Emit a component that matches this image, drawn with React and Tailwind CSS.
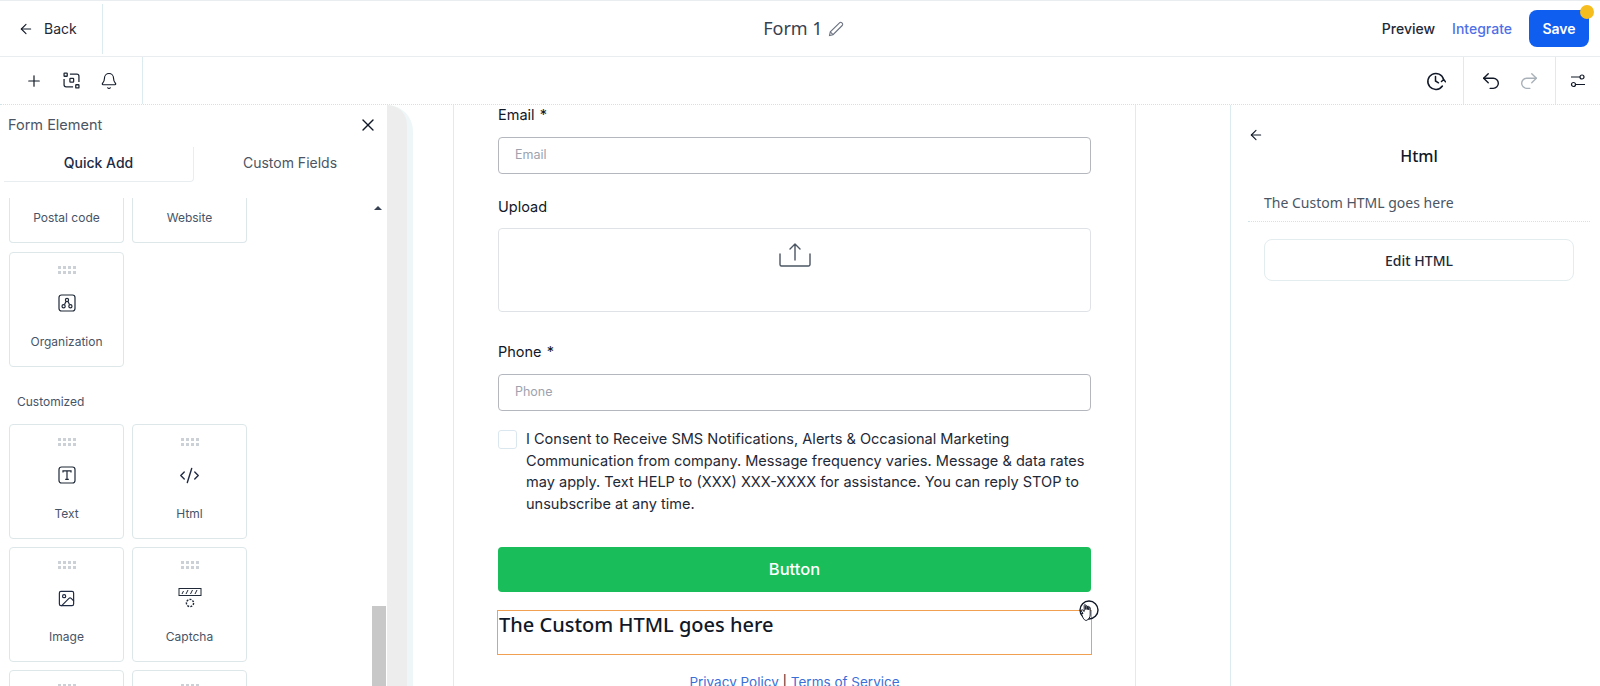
import { ArrowLeft, Plus, Bell, Undo2, Redo2, X, CodeXml, Image } from "lucide-react";

const inter = { fontFamily: "Inter, sans-serif" };

function ScanIcon() {
  return (
    <svg width="17" height="17" viewBox="0 0 16 16" fill="none" stroke="#1f2937" strokeWidth="1.2">
      <rect x="1" y="1" width="3" height="3" rx="0.5" />
      <rect x="6.5" y="6" width="3.5" height="3.5" rx="0.5" />
      <rect x="12" y="12" width="3" height="3" rx="0.5" />
      <path d="M6.5 2H13a2 2 0 0 1 2 2v5.5M1 6.5V12a2 2 0 0 0 2 2h6.5" />
    </svg>
  );
}

function HistoryIcon() {
  return (
    <svg width="20" height="20" viewBox="0 0 20 20" fill="none" stroke="#111827" strokeWidth="1.5" strokeLinecap="round">
      <path d="M17.6 8.5A8 8 0 1 0 16.4 15" />
      <path d="M9.5 5.5V10l3 1.8" />
      <path d="M15.5 10.5l2.2-2 1.8 2.2" />
    </svg>
  );
}

function SlidersIcon() {
  return (
    <svg width="16" height="14" viewBox="0 0 16 14" fill="none" stroke="#111827" strokeWidth="1.2">
      <circle cx="12" cy="3" r="2" />
      <circle cx="3.5" cy="10.5" r="2" />
      <path d="M1 3h9M5.5 10.5H15" />
    </svg>
  );
}

function PencilIcon() {
  return (
    <svg width="16" height="16" viewBox="0 0 16 16" fill="none" stroke="#6b7280" strokeWidth="1.1">
      <path d="M1.5 14.5l.8-3.6L11.5 1.8a1.6 1.6 0 0 1 2.3 0l.4.4a1.6 1.6 0 0 1 0 2.3L5 13.7z" />
      <path d="M2.3 10.9L5 13.7" />
    </svg>
  );
}

function ShareIcon() {
  return (
    <svg width="32" height="24" viewBox="0 0 32 24" fill="none" stroke="#4b5563" strokeWidth="1.4" strokeLinecap="round" strokeLinejoin="round">
      <path d="M16 17V1M11 6l5-5 5 5" />
      <path d="M1 11v10.5A1.5 1.5 0 0 0 2.5 23h27a1.5 1.5 0 0 0 1.5-1.5V11" />
    </svg>
  );
}

function OrgIcon() {
  return (
    <svg width="18" height="18" viewBox="0 0 18 18" fill="none" stroke="#1f2937" strokeWidth="1.2">
      <rect x="1" y="1" width="16" height="16" rx="2.5" />
      <circle cx="9" cy="6" r="1.6" />
      <circle cx="5.6" cy="12.2" r="1.6" />
      <circle cx="12.4" cy="12.2" r="1.6" />
      <path d="M8 7.5l-1.5 3M10 7.5l1.5 3" />
    </svg>
  );
}

function TextIcon() {
  return (
    <svg width="18" height="18" viewBox="0 0 18 18" fill="none" stroke="#1f2937" strokeWidth="1.2">
      <rect x="1" y="1" width="16" height="16" rx="2.5" />
      <path d="M5 6.5V4.8h8v1.7M9 4.8v8.6M7.2 13.4h3.6" />
    </svg>
  );
}

function CaptchaIcon() {
  return (
    <svg width="24" height="21" viewBox="0 0 24 21" fill="none" stroke="#1f2937" strokeWidth="1">
      <rect x="1" y="0.5" width="22" height="7" />
      <path d="M4 6l1.5-3M8 6l2-4M12.5 6l2-4M17 6l2-4" />
      <circle cx="12" cy="15" r="3.6" strokeWidth="1.4" strokeDasharray="2 1.2" />
    </svg>
  );
}

function HandCursor() {
  return (
    <svg width="22" height="24" viewBox="0 0 22 24" fill="none" stroke="#111827" strokeWidth="1">
      <circle cx="12" cy="10" r="9" strokeWidth="1.4" />
      <path d="M6 13.5L4 10.5l1.2-.8 2 1.8V5.5c0-1.2 1.6-1.2 1.6 0v4-3c0-1 1.5-1 1.5 0v3-2.6c0-1 1.5-1 1.5 0v3-2c0-1 1.4-1 1.4 0V15c0 2.5-1.6 4.5-4 5.5-2.5-.3-3.8-3.5-4.7-7z" fill="#ffffff" />
    </svg>
  );
}

function Dots() {
  return (
    <div className="grid grid-cols-4 gap-[2px]">
      {Array.from({ length: 8 }).map((_, i) => (
        <span key={i} className="w-[3px] h-[3px] bg-[#ccd1d8]" />
      ))}
    </div>
  );
}

function ElementCard({ label, icon }) {
  return (
    <div className="w-[115px] h-[115px] flex flex-col items-center border border-[#dde7ea] rounded-[4px] pt-[13px]">
      <Dots />
      <div className="h-[24px] mt-[17px] flex items-center justify-center">{icon}</div>
      <span className="mt-[18px] text-[12px] leading-[18px] text-[#475467]">{label}</span>
    </div>
  );
}

function LeftPanel() {
  return (
    <aside className="w-[387px] shrink-0 relative overflow-hidden bg-white">
      <div className="flex items-center justify-between pl-2 pr-[9px] h-[40px]">
        <span className="text-[14.5px] text-[#4b5563]">Form Element</span>
        <X size={20} color="#111827" strokeWidth={1.6} />
      </div>
      <div className="flex pl-[4px] h-[35px] mt-[2px]">
        <div className="w-[190px] flex justify-center pt-[6px] text-[14px] leading-[20px] font-medium text-[#1f2a44] border-b border-r border-[#e8edf0] rounded-br-[4px]">
          Quick Add
        </div>
        <div className="w-[192px] flex justify-center pt-[6px] text-[14px] leading-[20px] text-[#4b5563]">Custom Fields</div>
      </div>
      <div className="flex gap-[8px] pl-[9px] mt-[16px]">
        <div className="w-[115px] h-[45px] border-x border-b border-[#dde7ea] rounded-b-[4px] flex justify-center pt-[11px] text-[12px] leading-[18px] text-[#475467]">
          Postal code
        </div>
        <div className="w-[115px] h-[45px] border-x border-b border-[#dde7ea] rounded-b-[4px] flex justify-center pt-[11px] text-[12px] leading-[18px] text-[#475467]">
          Website
        </div>
      </div>
      <div className="pl-[9px] mt-[9px]">
        <ElementCard label="Organization" icon={<OrgIcon />} />
      </div>
      <div className="pl-[17px] mt-[26px] text-[12px] leading-[18px] text-[#475467]">Customized</div>
      <div className="grid grid-cols-[115px_115px] gap-x-[8px] gap-y-[8px] pl-[9px] mt-[13px]">
        <ElementCard label="Text" icon={<TextIcon />} />
        <ElementCard label="Html" icon={<CodeXml size={21} color="#1f2a44" strokeWidth={1.6} />} />
        <ElementCard label="Image" icon={<Image size={19} color="#1f2a44" strokeWidth={1.5} />} />
        <ElementCard label="Captcha" icon={<CaptchaIcon />} />
        <ElementCard label="" icon={null} />
        <ElementCard label="" icon={null} />
      </div>
      <span className="absolute left-[374px] top-[101px] w-0 h-0 border-x-[4px] border-x-transparent border-b-[4px] border-b-[#374151]" />
      <div className="absolute left-[372px] top-[501px] w-[14px] h-[90px] bg-[#c8c8c8]" />
    </aside>
  );
}

function Field({ label, placeholder }) {
  return (
    <div>
      <label className="block text-[14.5px] leading-[20px] text-[#111827]">
        {label} <span className="ml-[1px]">*</span>
      </label>
      <div className="mt-[12px] h-[37px] border border-[#b4b8be] rounded-[4px] flex items-center pl-[16px] text-[12.5px] text-[#9ca3af]">
        {placeholder}
      </div>
    </div>
  );
}

function FormCard() {
  return (
    <div className="ml-[40px] w-[683px] h-full border-x border-[#e3e9ec] bg-white pl-[44px] pr-[44px] relative">
      <Field label="Email" placeholder="Email" />
      <label className="block mt-[23px] text-[14.5px] leading-[20px] text-[#111827]">Upload</label>
      <div className="mt-[11px] h-[84px] border border-[#dfe3e8] rounded-[4px] flex justify-center pt-[14px]">
        <ShareIcon />
      </div>
      <div className="mt-[30px]">
        <Field label="Phone" placeholder="Phone" />
      </div>
      <div className="flex gap-[9px] mt-[18px]">
        <span className="w-[19px] h-[19px] mt-[1px] shrink-0 border border-[#dbe7ee] rounded-[3px]" />
        <p className="text-[14.55px] leading-[21.5px] text-[#1f2937]">
          I Consent to Receive SMS Notifications, Alerts &amp; Occasional Marketing Communication from company. Message
          frequency varies. Message &amp; data rates may apply. Text HELP to (XXX) XXX-XXXX for assistance. You can
          reply STOP to unsubscribe at any time.
        </p>
      </div>
      <button className="mt-[32px] w-full h-[45px] bg-[#19bd5a] rounded-[4px] text-white text-[16.5px] font-medium">
        Button
      </button>
      <div className="mt-[18px] -mx-[1px] h-[45px] border border-[#f0a050] pl-[1px] text-[20px] leading-[28px] font-medium text-[#111827]" style={{ fontFamily: "'Noto Sans', sans-serif" }}>
        The Custom HTML goes here
      </div>
      <p className="mt-[17px] text-center text-[13.5px] leading-[20px] text-[#1f2937]">
        <span className="text-[#3b6fd8]">Privacy Policy</span> | <span className="text-[#3b6fd8]">Terms of Service</span>
      </p>
      <div className="absolute left-[623px] top-[495px]">
        <HandCursor />
      </div>
    </div>
  );
}

function RightPanel() {
  return (
    <aside className="w-[370px] shrink-0 border-l border-[#dcebef] bg-white pt-[22px]" style={{ fontFamily: "'Noto Sans', sans-serif" }}>
      <div className="pl-[17px]">
        <ArrowLeft size={16} color="#111827" strokeWidth={1.6} />
      </div>
      <div className="text-center text-[16px] leading-[22px] font-medium text-[#111827] mt-[2px] pl-[7px]">Html</div>
      <div className="ml-[17px] mr-[10px] mt-[26px] pl-[16px] pb-[8px] border-b border-dotted border-[#cfe3e8] text-[14px] leading-[20px] text-[#4b5563]">
        The Custom HTML goes here
      </div>
      <button className="ml-[33px] mt-[17px] w-[310px] h-[42px] border border-[#e3ecef] rounded-[8px] text-[14px] font-medium text-[#1f2937]">
        Edit HTML
      </button>
    </aside>
  );
}

export default function App() {
  return (
    <div className="w-[1600px] h-[686px] overflow-hidden flex flex-col bg-white" style={inter}>
      <header className="h-[57px] shrink-0 flex items-center border-t border-b border-[#e9edef] relative">
        <div className="w-[103px] h-[50px] border-r border-[#dcebef] flex items-center gap-[10px] pl-[18px] text-[14px] text-[#1f2937]">
          <ArrowLeft size={16} color="#111827" strokeWidth={1.6} />
          <span>Back</span>
        </div>
        <div className="flex-1 flex items-center justify-center gap-[5px] pl-[122px]" style={{ fontFamily: "'Noto Sans', sans-serif" }}>
          <span className="text-[18px] text-[#374151]">Form 1</span>
          <PencilIcon />
        </div>
        <div className="flex items-center pr-[11px]">
          <span className="text-[14px] font-medium text-[#1f2937]">Preview</span>
          <span className="ml-[17px] text-[14px] font-medium text-[#4f6fe8]">Integrate</span>
          <button className="relative ml-[17px] w-[60px] h-[37px] rounded-[8px] bg-[#0f5ef0] text-white text-[14px] font-semibold">
            Save
            <span className="absolute -right-[5px] -top-[5px] w-[14px] h-[14px] rounded-full bg-[#f6bd1e]" />
          </button>
        </div>
      </header>
      <div className="h-[48px] shrink-0 flex items-center justify-between border-b border-dotted border-[#cfe3e8]">
        <div className="w-[143px] h-full border-r border-[#dcebef] flex items-center pl-[25px] gap-[20px]">
          <Plus size={18} color="#111827" strokeWidth={1.6} />
          <ScanIcon />
          <Bell size={18} color="#111827" strokeWidth={1.5} />
        </div>
        <div className="flex h-full items-center">
          <div className="pr-[17px]">
            <HistoryIcon />
          </div>
          <div className="w-[93px] h-full border-x border-[#dcebef] flex items-center justify-center gap-[16px]">
            <Undo2 size={22} color="#111827" strokeWidth={1.5} />
            <Redo2 size={22} color="#a8b0b8" strokeWidth={1.5} />
          </div>
          <div className="w-[44px] flex justify-center">
            <SlidersIcon />
          </div>
        </div>
      </div>
      <main className="flex-1 min-h-0 flex">
        <LeftPanel />
        <div className="w-[26px] shrink-0 bg-[#eef6f7] rounded-tr-[30px]">
          <div className="w-[20px] h-full bg-[#ededed] rounded-tr-[26px]" />
        </div>
        <div className="flex-1 min-w-0">
          <FormCard />
        </div>
        <RightPanel />
      </main>
    </div>
  );
}
